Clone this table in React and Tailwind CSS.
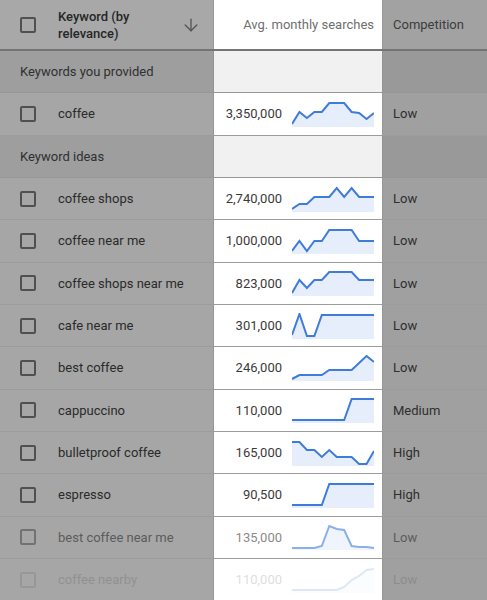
import { ArrowDown } from 'lucide-react';

const rows = [
  { section: 'Keywords you provided' },
  { kw: 'coffee', num: '3,350,000', comp: 'Low', pts: [23, 11, 17, 11, 11, 2, 2, 2, 11, 12, 18, 12] },
  { section: 'Keyword ideas' },
  { kw: 'coffee shops', num: '2,740,000', comp: 'Low', pts: [23, 18, 18, 11, 11, 11, 2, 11, 2, 11, 11, 11] },
  { kw: 'coffee near me', num: '1,000,000', comp: 'Low', pts: [23, 13, 23, 13, 13, 2, 2, 2, 2, 13, 13, 13] },
  { kw: 'coffee shops near me', num: '823,000', comp: 'Low', pts: [23, 10, 18, 10, 10, 2, 2, 2, 2, 10, 10, 10] },
  { kw: 'cafe near me', num: '301,000', comp: 'Low', pts: [22, 1, 23, 23, 2, 2, 2, 2, 2, 2, 2, 2] },
  { kw: 'best coffee', num: '246,000', comp: 'Low', pts: [24, 20, 20, 20, 20, 15, 15, 15, 15, 8, 1, 7] },
  { kw: 'cappuccino', num: '110,000', comp: 'Medium', pts: [23, 23, 23, 23, 23, 23, 23, 23, 2, 2, 2, 2] },
  { kw: 'bulletproof coffee', num: '165,000', comp: 'High', pts: [2, 2, 10, 10, 17, 10, 17, 17, 17, 24, 24, 11] },
  { kw: 'espresso', num: '90,500', comp: 'High', pts: [23, 23, 23, 23, 23, 2, 2, 2, 2, 2, 2, 2] },
  { kw: 'best coffee near me', num: '135,000', comp: 'Low', pts: [24, 24, 24, 24, 22, 2, 5, 6, 22, 23, 23, 24], fade: 'opacity-60' },
  { kw: 'coffee nearby', num: '110,000', comp: 'Low', pts: [23, 23, 23, 23, 23, 23, 23, 20, 13, 9, 3, 2], fade: 'opacity-[0.17]' },
];

const Sparkline = ({ pts }) => {
  const line = pts.map((y, i) => `${((i * 82) / 11).toFixed(2)},${y}`).join(' ');
  return (
    <svg width="82" height="26" viewBox="0 0 82 26" className="shrink-0">
      <polygon points={`${line} 82,26 0,26`} fill="#e6eefc" />
      <polyline points={line} fill="none" stroke="#3f7bd9" strokeWidth="2" />
    </svg>
  );
};

const Checkbox = () => (
  <div className="w-4 h-4 shrink-0 rounded-[2px] border-2 border-[#505050]" />
);

const App = () => {
  return (
    <div className="w-[487px] h-[600px] overflow-hidden text-[13px] font-['Roboto',sans-serif]">
      {/* header */}
      <div className="flex h-[51px] border-b-2 border-[#747474]">
        <div className="w-[213px] flex items-center bg-[#a8a8a8] pl-5 pr-3">
          <Checkbox />
          <div className="ml-[22px] flex-1 font-medium leading-[17px] text-[#262626]">
            Keyword (by
            <br />
            relevance)
          </div>
          <ArrowDown size={20} strokeWidth={1.6} className="text-[#555]" />
        </div>
        <div className="w-[170px] flex items-center justify-end bg-white pr-2 text-[#6f6f6f] border-x border-[#979797]">
          Avg. monthly searches
        </div>
        <div className="flex-1 flex items-center bg-[#a2a2a2] pl-[10px] text-[#3c3c3c]">
          Competition
        </div>
      </div>

      {rows.map((r, i) =>
        r.section ? (
          <div key={i} className="flex h-[42.33px] border-b border-[#979797]">
            <div className="w-[213px] flex items-center bg-[#9e9e9e] pl-5 text-[#303030]">
              {r.section}
            </div>
            <div className="w-[170px] bg-[#f1f1f1] border-x border-[#939393]" />
            <div className="flex-1 bg-[#999999]" />
          </div>
        ) : (
          <div key={i} className="flex h-[42.33px] border-b border-[#9c9c9c]">
            <div className="w-[213px] bg-[#a6a6a6] pl-5">
              <div className={`h-full flex items-center ${r.fade || ''}`}>
                <Checkbox />
                <span className="ml-[22px] text-[#2a2a2a]">{r.kw}</span>
              </div>
            </div>
            <div className="w-[170px] bg-white border-x border-[#979797] border-b-[#e3e3e3]">
              <div className={`h-full flex items-center justify-end gap-[10px] pr-2 ${r.fade || ''}`}>
                <span className="text-[#3a3a3a]">{r.num}</span>
                <Sparkline pts={r.pts} />
              </div>
            </div>
            <div className="flex-1 bg-[#a0a0a0] pl-[10px]">
              <div className={`h-full flex items-center text-[#2e2e2e] ${r.fade || ''}`}>
                {r.comp}
              </div>
            </div>
          </div>
        ),
      )}
    </div>
  );
};

export default App;
